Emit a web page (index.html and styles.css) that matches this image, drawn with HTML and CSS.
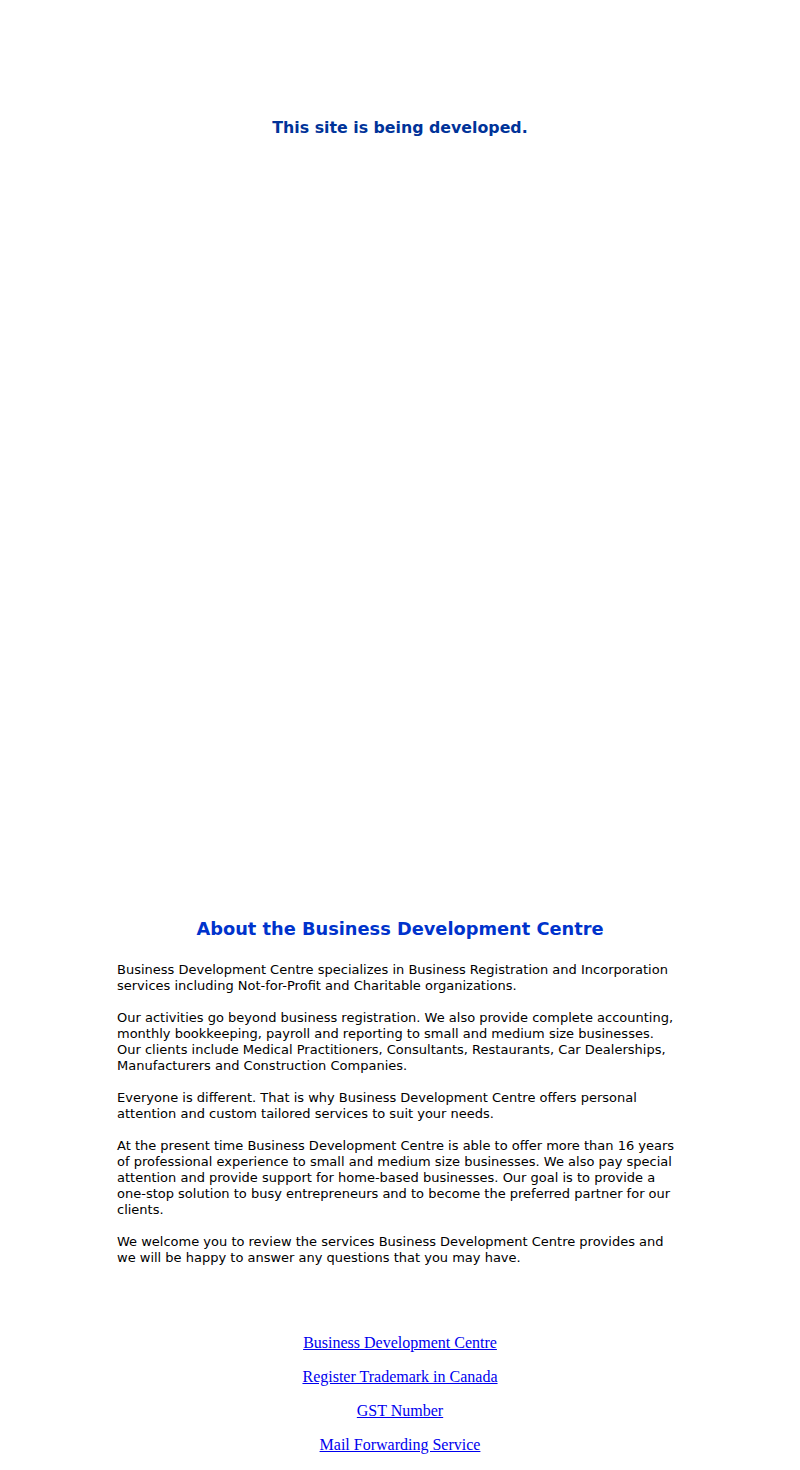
FILE: index.html
```html
<!DOCTYPE html>
<html>
<head>
<meta charset="utf-8">
<title>Business Development Centre</title>
<link rel="stylesheet" href="styles.css">
</head>
<body>
<div class="top">
  <h2 class="notice">This site is being developed.</h2>
</div>
<div class="spacer"></div>
<div class="about">
  <h1 class="about-title">About the Business Development Centre</h1>
  <div class="about-text">
    <p>Business Development Centre specializes in Business Registration and Incorporation services including Not-for-Profit and Charitable organizations.</p>
    <p>Our activities go beyond business registration. We also provide complete accounting, monthly bookkeeping, payroll and reporting to small and medium size businesses. Our clients include Medical Practitioners, Consultants, Restaurants, Car Dealerships, Manufacturers and Construction Companies.</p>
    <p>Everyone is different. That is why Business Development Centre offers personal attention and custom tailored services to suit your needs.</p>
    <p>At the present time Business Development Centre is able to offer more than 16 years of professional experience to small and medium size businesses. We also pay special attention and provide support for home-based businesses. Our goal is to provide a one-stop solution to busy entrepreneurs and to become the preferred partner for our clients.</p>
    <p>We welcome you to review the services Business Development Centre provides and we will be happy to answer any questions that you may have.</p>
  </div>
</div>
<div class="links">
  <p><a href="#">Business Development Centre</a></p>
  <p><a href="#">Register Trademark in Canada</a></p>
  <p><a href="#">GST Number</a></p>
  <p><a href="#">Mail Forwarding Service</a></p>
</div>
</body>
</html>
```
FILE: styles.css
```css
body {
  margin: 8px;
  background: #ffffff;
  font-family: "Liberation Serif", serif;
}
.top {
  padding-top: 109px;
  text-align: center;
}
.notice {
  margin: 0;
  font-family: "DejaVu Sans", Verdana, sans-serif;
  font-size: 15.8px;
  line-height: 22px;
  font-weight: bold;
  color: #003399;
}
.spacer {
  height: 778px;
}
.about {
  width: 566px;
  margin: 0 auto;
}
.about-title {
  margin: 0 0 21px;
  text-align: center;
  font-family: "DejaVu Sans", Verdana, sans-serif;
  font-size: 17.8px;
  line-height: 24px;
  font-weight: bold;
  color: #0033cc;
}
.about-text {
  padding-right: 4px;
  font-family: "DejaVu Sans", Verdana, sans-serif;
  font-size: 13px;
  line-height: 16px;
  color: #000000;
}
.about-text p {
  margin: 0 0 16px;
}
.links {
  margin-top: 68px;
  text-align: center;
}
.links p {
  margin: 0 0 16px;
  font-size: 16px;
  line-height: 18px;
}
.links a {
  color: #0000ee;
}
```
